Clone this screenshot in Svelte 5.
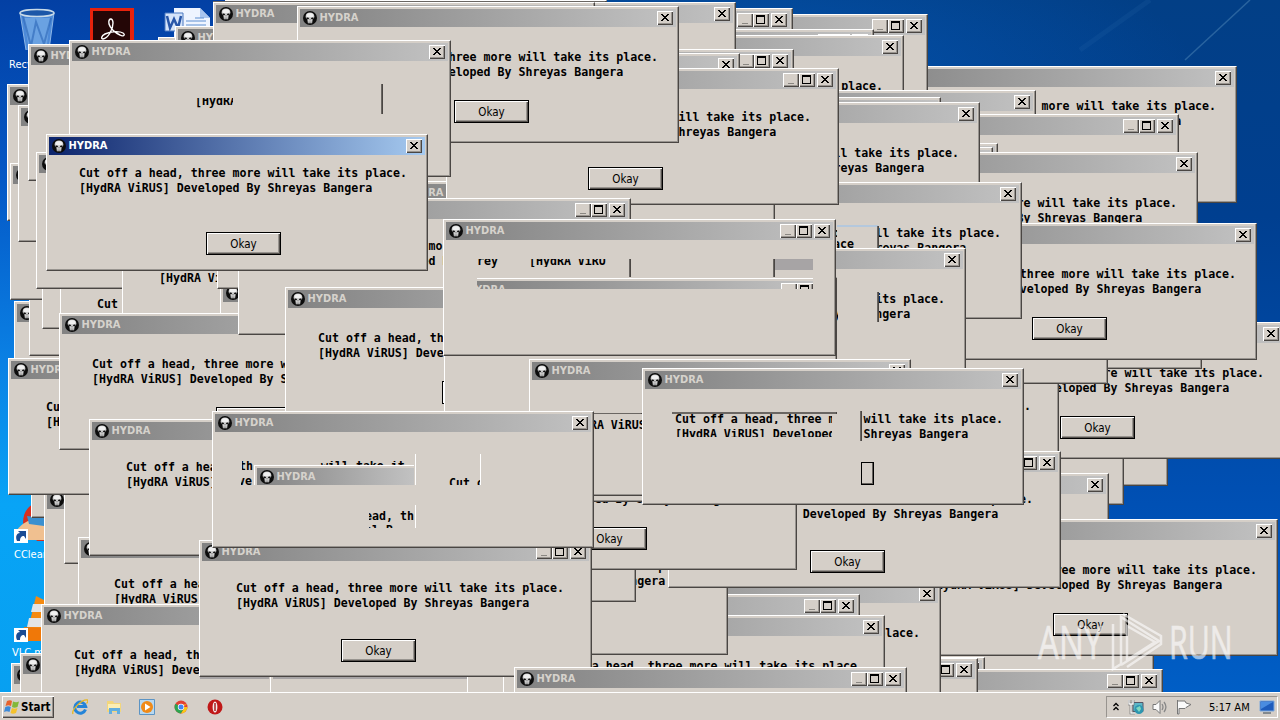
<script lang="ts">
    type Kind = "dialog" | "form";

    interface Win {
        x: number;
        y: number;
        kind: Kind;
        /** Offset of the first message line from the window's corner. */
        tx: number;
        ty: number;
        /** Offset of the Okay button. */
        bx: number;
        by: number;
        active: boolean;
        /** The client area holds a message. */
        message: boolean;
        /** The client area holds the Okay button. */
        button: boolean;
    }

    const lines = ["Cut off a head, three more will take its place.", "[HydRA ViRUS] Developed By Shreyas Bangera"];

    /** Windows that never painted their client area. */
    const blank = { message: false, button: false };
    const noButton = { button: false };

    /** Plain dialog: only a close button. */
    function dialog(x: number, y: number, opts: Partial<Win> = {}): Win {
        return { x, y, kind: "dialog", tx: 33, ty: 51, bx: 157, by: 94, active: false, message: true, button: true, ...opts };
    }

    /** Form window: minimize, maximize and close. */
    function form(x: number, y: number, opts: Partial<Win> = {}): Win {
        return { x, y, kind: "form", tx: 37, ty: 48, bx: 142, by: 99, active: false, message: true, button: true, ...opts };
    }

    // back to front
    const windows: Win[] = [
        dialog(158, 37, blank),
        dialog(225, 0, blank),
        dialog(855, 66, { ty: 40, button: false }),
        form(535, 14, blank),
        form(400, 8, blank),
        dialog(175, 26, blank),
        form(481, 29, blank),
        dialog(522, 35, noButton),
        dialog(654, 90, blank),
        form(548, 97, blank),
        form(786, 114, blank),
        dialog(616, 143, blank),
        dialog(611, 147, blank),
        dialog(354, 2, blank),
        dialog(213, 2, blank),
        form(401, 49, blank),
        dialog(358, 53, blank),
        dialog(816, 152, noButton),
        dialog(598, 102, noButton),
        dialog(786, 349, blank),
        dialog(742, 368, blank),
        dialog(903, 322),
        form(666, 358, noButton),
        form(809, 232, blank),
        form(715, 247, blank),
        dialog(875, 223),
        form(444, 92, blank),
        dialog(640, 182, noButton),
        dialog(584, 248, noButton),
        dialog(727, 473, blank),
        dialog(772, 534, blank),
        dialog(896, 519),
        dialog(603, 657, blank),
        form(770, 669, blank),
        form(585, 658, blank),
        dialog(559, 582, noButton),
        form(133, 600, blank),
        form(467, 594, blank),
        dialog(503, 615, noButton),
        dialog(7, 84, blank),
        dialog(14, 301, blank),
        dialog(29, 219, blank),
        dialog(10, 163, blank),
        dialog(18, 105, blank),
        dialog(28, 44, blank),
        form(42, 192, blank),
        form(60, 256, noButton),
        dialog(36, 152, blank),
        form(122, 215, noButton),
        form(220, 281, blank),
        dialog(217, 152, blank),
        dialog(31, 381, blank),
        dialog(44, 488, blank),
        form(64, 427, blank),
        form(8, 358, { tx: 38, ty: 49, button: false }),
        dialog(59, 313),
        form(78, 537, { tx: 36, ty: 47, button: false }),
        dialog(11, 663, blank),
        dialog(20, 653, blank),
        form(382, 181, blank),
        form(335, 518, noButton),
        dialog(254, 465, blank),
        form(668, 451),
        dialog(415, 433),
        form(300, 365, blank),
        form(446, 68, { ty: 49 }),
        dialog(297, 6),
        form(238, 198, noButton),
        dialog(285, 287),
        form(444, 277, blank),
        dialog(529, 359, noButton),
        form(89, 419, noButton),
        dialog(41, 604, noButton),
        form(199, 540),
        dialog(69, 40, blank),
        form(443, 219, blank),
        dialog(212, 411, blank),
        dialog(642, 368, noButton),
        form(514, 667, blank),
        dialog(46, 134, { ty: 39, bx: 160, by: 98, active: true }),
    ];

    type Tone = "face" | "dark" | "light" | "bar" | "sky";

    /** Stale areas of the screen that were never repainted. */
    const strips: { x: number; y: number; w: number; h: number; tone: Tone }[] = [
        { x: 213, y: 1, w: 393, h: 1, tone: "dark" },
        { x: 837, y: 225, w: 41, h: 23, tone: "face" },
        { x: 837, y: 225, w: 41, h: 2, tone: "sky" },
        { x: 877, y: 226, w: 2, h: 22, tone: "dark" },
        { x: 838, y: 290, w: 40, h: 34, tone: "face" },
        { x: 836, y: 292, w: 1, h: 30, tone: "dark" },
        { x: 877, y: 292, w: 2, h: 30, tone: "dark" },
        { x: 381, y: 84, w: 2, h: 30, tone: "dark" },
        { x: 629, y: 259, w: 2, h: 18, tone: "dark" },
        { x: 773, y: 259, w: 2, h: 18, tone: "dark" },
        { x: 775, y: 259, w: 38, h: 11, tone: "bar" },
        { x: 545, y: 398, w: 97, h: 13, tone: "face" },
        { x: 594, y: 411, w: 48, h: 7, tone: "face" },
        { x: 594, y: 413, w: 48, h: 1, tone: "dark" },
        { x: 415, y: 454, w: 1, h: 31, tone: "light" },
        { x: 480, y: 454, w: 1, h: 31, tone: "light" },
        { x: 415, y: 505, w: 1, h: 23, tone: "light" },
        { x: 672, y: 405, w: 189, h: 44, tone: "face" },
        { x: 672, y: 412, w: 165, h: 2, tone: "dark" },
        { x: 860, y: 411, w: 2, h: 30, tone: "dark" },
        { x: 410, y: 677, w: 20, h: 15, tone: "face" },
        { x: 200, y: 677, w: 69, h: 2, tone: "bar" },
        { x: 270, y: 677, w: 1, h: 15, tone: "light" },
        { x: 273, y: 677, w: 194, h: 2, tone: "bar" },
    ];

    /** Text left over from windows that moved on, clipped to a box. */
    const scraps: { x: number; y: number; w: number; h: number; dx: number; dy: number; text: string }[] = [
        { x: 837, y: 240, w: 18, h: 8, dx: -4, dy: -3, text: "ace" },
        { x: 196, y: 98, w: 37, h: 12, dx: -1, dy: -4, text: "[HydRA" },
        { x: 477, y: 259, w: 21, h: 12, dx: -7, dy: -5, text: "hrey" },
        { x: 530, y: 259, w: 78, h: 8, dx: -1, dy: -5, text: "[HydRA ViRU" },
        { x: 242, y: 461, w: 11, h: 12, dx: -3, dy: -2, text: "th" },
        { x: 318, y: 461, w: 87, h: 4, dx: 3, dy: -2, text: "will take its" },
        { x: 241, y: 478, w: 12, h: 11, dx: -3, dy: -4, text: "ve" },
        { x: 449, y: 477, w: 31, h: 8, dx: 0, dy: -1, text: "Cut o" },
        { x: 369, y: 509, w: 46, h: 15, dx: -4, dy: 0, text: "ead, th" },
        { x: 369, y: 525, w: 46, h: 3, dx: -4, dy: -2, text: "el B" },
        { x: 675, y: 414, w: 157, h: 10, dx: 0, dy: -2, text: "Cut off a head, three m" },
        { x: 675, y: 429, w: 157, h: 8, dx: 0, dy: -2, text: "[HydRA ViRUS] Developed" },
    ];
</script>

{#snippet skull()}
    <svg class="skull" viewBox="0 0 14 14">
        <circle cx="7" cy="7" r="7" fill="#0c0c0c" />
        <path d="M2.600 5.600C2.600 2.900 4.400 1.400 7 1.400s4.400 1.500 4.400 4.200c0 1.200-.6 1.900-1.700 2.400l-.6 4.200H4.900L4.300 8c-1.100-.5-1.700-1.200-1.700-2.400z" fill="#d0d0d0" />
        <path d="M3.500 3.800C4 2.700 5.300 2.200 7 2.200s3 .5 3.500 1.600L9.800 6H4.200z" fill="#f0f0f0" />
        <path d="M3.600 6.200l2.600.8-.7 1.300-1.700-.4zM10.400 6.200l-2.600.8.7 1.300 1.700-.4zM6.700 8.300h.6v1h-.6z" fill="#111" />
        <path d="M5.900 10.500v2M7 10.500v2M8.100 10.500v2" stroke="#444" stroke-width=".4" />
    </svg>
{/snippet}

{#snippet captionButton(name: string)}
    <span class="cap">
        <svg viewBox="0 0 16 14" shape-rendering="crispEdges">
            {#if name === "min"}
                <path d="M5 10h6v1H5z" fill="#8a8782" />
            {:else if name === "max"}
                <path d="M3 2h9v9H3zM4 4v6h7V4z" fill="#000" fill-rule="evenodd" />
            {:else}
                <path d="M4 3h2v1h1v1h2V4h1V3h2v1h-1v1h-1v1H9v1h1v1h1v1h1v1h-2V9H9V8H7v1H6v1H4V9h1V8h1V7h1V6H6V5H5V4H4z" fill="#000" />
            {/if}
        </svg>
    </span>
{/snippet}

<div class="desktop">
    <svg class="wallpaper" viewBox="0 0 1280 720">
        <defs>
            <linearGradient id="sky" x1="0" y1="0" x2="0" y2="1">
                <stop offset="0" stop-color="#0340a4" />
                <stop offset=".25" stop-color="#0458c6" />
                <stop offset=".5" stop-color="#0a80e4" />
                <stop offset=".7" stop-color="#08a4f6" />
                <stop offset="1" stop-color="#079ff0" />
            </linearGradient>
            <linearGradient id="right" x1="0" y1="0" x2="0" y2="1">
                <stop offset="0" stop-color="#023f86" />
                <stop offset=".3" stop-color="#003f90" />
                <stop offset=".7" stop-color="#0050b4" />
                <stop offset="1" stop-color="#0060c8" />
            </linearGradient>
            <radialGradient id="glow" cx=".2" cy=".4" r=".8">
                <stop offset="0" stop-color="#0458b8" stop-opacity=".8" />
                <stop offset="1" stop-color="#0458b8" stop-opacity="0" />
            </radialGradient>
        </defs>
        <rect width="640" height="720" fill="url(#sky)" />
        <rect x="600" width="680" height="720" fill="url(#right)" />
        <rect x="600" width="600" height="200" fill="url(#glow)" />
        <path d="M1185 60L1250 0" stroke="#5088b8" stroke-width="1.500" opacity=".5" />
        <path d="M1080 50L1150 0" stroke="#3070b0" stroke-width="5" opacity=".15" />

        <!-- recycle bin -->
        <path d="M20 12h34l-5 38H26z" fill="#4d8ad8" />
        <path d="M24 18h26l-3 26H28z" fill="#7fb2ea" opacity=".6" />
        <path d="M23 16l8 30 5-24 8 22 7-26" fill="none" stroke="#2c66b8" stroke-width="2" opacity=".6" />
        <path d="M20 13l6 37M54 13l-5 37" stroke="#a9cdf2" opacity=".8" />
        <ellipse cx="37" cy="13" rx="17" ry="3.500" fill="#1c57a8" stroke="#c8dae8" stroke-width="1.500" />
        <!-- pdf reader -->
        <path d="M90 8h44v40H90z" fill="#e8220c" />
        <path d="M93 11h37v36H93z" fill="#240606" />
        <path d="M109 24c-1-6 4-7 4-1 0 7-5 15-10 16-2 0-2-3 2-5 6-3 15-3 18-1 3 2 0 4-3 2-5-2-10-7-11-11z" fill="none" stroke="#fff" stroke-width="1.400" />
        <!-- word document -->
        <path d="M174 8h26l10 10v30h-36z" fill="#eef4ff" />
        <path d="M200 8l10 10h-10z" fill="#a8c4ee" />
        <path d="M186 21h20M186 25h20M195 18h9" stroke="#5e8fd0" />
        <path d="M165 13h18v18h-18z" fill="#d5e4fa" stroke="#4a78c0" />
        <path d="M167 16l3 12 4-9 4 9 3-12" fill="none" stroke="#2856a8" stroke-width="2.500" />
        <!-- cleaner -->
        <path d="M35 503c-8 4-12 10-12 20l14 18h8v-36z" fill="#d63020" />
        <path d="M17 530c8-10 16-12 27-8v18H28z" fill="#f0c090" />
        <path d="M27 516l17 2v8l-15-2z" fill="#3a90d0" />
        <!-- cone -->
        <path d="M36 596l-9 38h17v-34z" fill="#f58a10" />
        <path d="M33 604l-2 8h13v-8zM29 618l-2 9h17v-9z" fill="#e4e4e4" />
        <path d="M24 627l-2 14h22v-13z" fill="#f07808" />
        {#each [529, 628] as top}
            <rect x="14" y={top} width="14" height="14" fill="#fff" />
            <path d="M17 {top + 12}c-2-5 0-8 3-8l-2-2h8v8l-2-3c-3 0-4 2-4 5z" fill="#1c4c94" />
        {/each}
    </svg>
    <span class="label recycle">Recycle Bin</span>
    <span class="label cleaner">CCleaner</span>
    <span class="label player">VLC media</span>

    {#each windows as w}
        <section
            class="win {w.kind}"
            class:active={w.active}
            style:left="{w.x}px"
            style:top="{w.y}px"
            style:--tx="{w.tx}px"
            style:--ty="{w.ty}px"
            style:--bx="{w.bx}px"
            style:--by="{w.by}px"
        >
            <header>
                {@render skull()}
                <span class="name">HYDRA</span>
                {#if w.kind === "form"}
                    {@render captionButton("min")}
                    {@render captionButton("max")}
                {/if}
                <span class="gap"></span>
                {@render captionButton("close")}
            </header>
            {#if w.message}
                <div class="message">
                    {#each lines as line}
                        <p>{line}</p>
                    {/each}
                </div>
            {/if}
            {#if w.button}
                <span class="okay">Okay</span>
            {/if}
        </section>
    {/each}

    {#each strips as s}
        <i class="strip {s.tone}" style:left="{s.x}px" style:top="{s.y}px" style:width="{s.w}px" style:height="{s.h}px"></i>
    {/each}

    {#each scraps as s}
        <div class="scrap" style:left="{s.x}px" style:top="{s.y}px" style:width="{s.w}px" style:height="{s.h}px">
            <p style:margin-left="{s.dx}px" style:margin-top="{s.dy}px">{s.text}</p>
        </div>
    {/each}

    <div class="torn upper">
        <header>
            <span class="name">YDRA</span>
            {@render captionButton("min")}
            {@render captionButton("max")}
        </header>
    </div>
    <div class="torn lower">
        <header>
            {@render skull()}
            <span class="name">HYDRA</span>
        </header>
    </div>
    <i class="sliver"></i>

    <footer class="taskbar">
        <div class="start">
            <svg viewBox="0 0 16 16" width="16" height="16">
                <path d="M3 2c2-1 4-1 5 0L7 7C5 6 4 6 1.500 7z" fill="#e8622c" />
                <path d="M9 2.500c2 1 4 1 6 0L13.500 8c-2 1-4 1-5.500 0z" fill="#83b83a" />
                <path d="M1.300 8c2-1 4-1 5.500 0L5.500 13c-2-1-3.500-1-5.500 0z" fill="#3d8ad8" />
                <path d="M8 9c1.500 1 3.500 1 5.500 0L12 14c-2 1-4 1-5.500 0z" fill="#f5c22c" />
            </svg>
            <b>Start</b>
        </div>
        <div class="launch">
            <svg viewBox="0 0 16 16">
                <path d="M13.500 10.500A5.500 5.500 0 1 1 13.700 7.500H5" fill="none" stroke="#2484d8" stroke-width="3" />
                <path d="M1 15C-1 11 10 0 15.500 1c1 1-.5 3-1 3.500" fill="none" stroke="#e8b820" stroke-width="1.300" />
            </svg>
            <svg viewBox="0 0 16 16">
                <path d="M1 2h6l1 2h7v9H1z" fill="#f2d67c" />
                <path d="M2 5h12v5H2z" fill="#fbeeb4" />
                <path d="M3 9h11v6h-3v-3H6v3H3z" fill="#62aede" />
            </svg>
            <svg viewBox="0 0 16 16">
                <path d="M.5.500h15v15H.5z" fill="#b8d8f0" stroke="#5c94c4" />
                <circle cx="8" cy="8" r="6" fill="#f08a18" />
                <path d="M6 4.500L11.500 8 6 11.500z" fill="#fff" />
            </svg>
            <svg viewBox="0 0 16 16">
                <circle cx="8" cy="8" r="6.500" fill="#e34133" />
                <path d="M8 8L2.400 4.800A6.500 6.500 0 0 0 8 14.500L11 9.500z" fill="#2da450" />
                <path d="M8 8h6.500A6.500 6.500 0 0 1 8 14.500l3-5-.5-4h3.800z" fill="#fbc816" />
                <circle cx="8" cy="8" r="3.200" fill="#fff" />
                <circle cx="8" cy="8" r="2.500" fill="#4285f4" />
            </svg>
            <svg viewBox="0 0 16 16">
                <circle cx="8" cy="8" r="7.500" fill="#c01818" />
                <ellipse cx="8" cy="8" rx="2.400" ry="5.500" fill="#f4ecec" />
                <path d="M7.300 4h1.400v8H7.300z" fill="#a01414" />
            </svg>
        </div>
        <div class="tray">
            <svg viewBox="0 0 8 12" width="8" height="12">
                <path d="M1.500 5L4 2.500 6.500 5M1.500 9L4 6.500 6.500 9" fill="none" stroke="#000" stroke-width="1.300" />
            </svg>
            <svg viewBox="0 0 16 16" width="16" height="16">
                <path d="M5 3.500h10v9H5z" fill="#5cb6c8" stroke="#556" />
                <path d="M1 1v4h4V1M3 5v9h4" fill="none" stroke="#666" stroke-width="2.600" />
                <path d="M1 1v4h4V1M3 5v9h4" fill="none" stroke="#f8f8f8" stroke-width="1.400" />
                <circle cx="11" cy="10.500" r="4.500" fill="#2e96b0" />
                <path d="M8 9l4-2 1 3-2 3z" fill="#80d8c0" />
            </svg>
            <svg viewBox="0 0 16 16" width="16" height="16">
                <path d="M1 5.500h3l4-4v13l-4-4H1z" fill="#fafafa" stroke="#777" />
                <path d="M10 5c1.300 2 1.300 4 0 6M12 3c2.300 3 2.300 7 0 10" fill="none" stroke="#888" stroke-width="1.300" />
            </svg>
            <svg viewBox="0 0 16 16" width="16" height="16">
                <path d="M1.500 1v14h1.500V9.500h6l1-1 5-3-5-1.500-1-2H1.500z" fill="#fafafa" stroke="#777" />
            </svg>
            <span class="clock">5:17 AM</span>
            <svg viewBox="0 0 16 14" width="16" height="14">
                <path d="M1 1h14v10H1z" fill="#1e5cbc" stroke="#7ca8dc" />
                <path d="M2 2h12L2 9z" fill="#4a8ce0" />
                <path d="M4 13h8" stroke="#345" />
            </svg>
        </div>
    </footer>

    <div class="watermark">
        <span class="word any">ANY</span>
        <svg viewBox="0 0 56 62" width="56" height="62">
            <path d="M4 14v45l8-5V7l38 24-38 24M14 4l38 22v8L18 57M18 16l28 16-28 18z" fill="none" stroke="#fff" stroke-width="2.500" />
        </svg>
        <span class="word run">RUN</span>
    </div>
</div>

<style>
    :global(body) {
        margin: 0;
        overflow: hidden;
    }

    .desktop {
        --face: #d5cfc8;
        --dark: #4a4643;
        position: relative;
        width: 1280px;
        height: 720px;
        overflow: hidden;
        display: flex;
        flex-direction: column;
        justify-content: flex-end;
        font-family: "DejaVu Sans Condensed", "DejaVu Sans", sans-serif;
        font-size: 11px;
        color: #000;
    }

    p {
        margin: 0;
        height: 15px;
        white-space: pre;
        font: bold 11.6px/15px "DejaVu Sans Mono", monospace;
    }

    .wallpaper {
        position: absolute;
        inset: 0;
    }

    .label {
        position: absolute;
        color: #fff;
        white-space: nowrap;
    }

    .recycle {
        left: 9px;
        top: 58px;
    }

    .cleaner {
        left: 14px;
        top: 548px;
    }

    .player {
        left: 12px;
        top: 646px;
    }

    .win {
        position: absolute;
        box-sizing: border-box;
        width: 382px;
        height: 137px;
        padding: 2px;
        overflow: hidden;
        background: var(--face);
        border: 1px solid #fff;
        border-right-color: var(--dark);
        border-bottom-color: var(--dark);
        box-shadow: inset -1px -1px #98948f;
    }

    .win.form {
        width: 393px;
    }

    header {
        display: flex;
        align-items: center;
        box-sizing: border-box;
        height: 18px;
        padding: 0 3px;
        background: linear-gradient(90deg, #828282, #c2c2c2);
        color: #d6d2cc;
    }

    .active header {
        background: linear-gradient(90deg, #0c246c, #a6caf0);
        color: #fff;
    }

    .skull {
        width: 14px;
        height: 14px;
        flex: none;
    }

    .name {
        flex: 1;
        margin-left: 2.5px;
        font: bold 11px/18px "DejaVu Sans Condensed", "DejaVu Sans", sans-serif;
    }

    .gap {
        width: 2px;
    }

    .cap {
        box-sizing: border-box;
        width: 16px;
        height: 14px;
        background: var(--face);
        box-shadow:
            inset 1px 1px #fff,
            inset -1px -1px var(--dark),
            inset -2px -2px #999590;
    }

    .cap svg {
        display: block;
        width: 16px;
        height: 14px;
    }

    .message {
        height: 30px;
        padding-left: calc(var(--tx) - 3px);
        padding-top: calc(var(--ty) - 28px);
    }

    .okay {
        display: block;
        box-sizing: border-box;
        width: 75px;
        height: 23px;
        margin-left: calc(var(--bx) - 3px);
        margin-top: calc(var(--by) - var(--ty) - 23px);
        border: 1px solid #000;
        box-shadow:
            inset 1px 1px #fff,
            inset -1px -1px #55514d,
            inset -2px -2px #98948f;
        text-align: center;
        font: 11.5px/22px "DejaVu Sans Condensed", "DejaVu Sans", sans-serif;
    }

    .strip,
    .scrap,
    .torn,
    .sliver {
        position: absolute;
        overflow: hidden;
    }

    .face {
        background: var(--face);
    }

    .dark {
        background: #6a6662;
        border-right: 1px solid var(--dark);
        box-sizing: border-box;
    }

    .light {
        background: #fff;
    }

    .bar {
        background: #a7a4a5;
    }

    .sky {
        background: #b4c8dd;
    }

    .torn {
        box-sizing: border-box;
        border-top: 1px solid #fff;
        padding-top: 2px;
    }

    .upper {
        left: 477px;
        top: 278px;
        width: 336px;
        height: 11px;
    }

    .upper header {
        padding-left: 0;
        padding-right: 0;
    }

    .upper .name {
        margin-left: -2px;
    }

    .lower {
        left: 254px;
        top: 465px;
        width: 160px;
        height: 20px;
        border-left: 1px solid #fff;
        padding-left: 2px;
    }

    .sliver {
        left: 861px;
        top: 462px;
        box-sizing: border-box;
        width: 13px;
        height: 23px;
        border: 1px solid #000;
        box-shadow: inset -1px -1px #65615d;
    }

    .taskbar {
        position: relative;
        box-sizing: border-box;
        height: 28px;
        display: flex;
        align-items: center;
        padding: 1px 2px 0;
        background: var(--face);
        border-top: 1px solid #fff;
    }

    .start {
        box-sizing: border-box;
        width: 52px;
        height: 22px;
        display: flex;
        align-items: center;
        gap: 1px;
        padding-left: 2px;
        box-shadow:
            inset 1px 1px #fff,
            inset -1px -1px var(--dark),
            inset -2px -2px #98948f;
    }

    .start b {
        font-size: 11.5px;
    }

    .launch {
        display: flex;
        gap: 17.7px;
        padding-left: 18px;
    }

    .launch svg {
        width: 16px;
        height: 16px;
    }

    .tray {
        box-sizing: border-box;
        width: 172px;
        height: 22px;
        margin-left: auto;
        display: flex;
        align-items: center;
        gap: 8px;
        padding-left: 5px;
        border: 1px solid #98948f;
        border-right-color: #fff;
        border-bottom-color: #fff;
    }

    .clock {
        margin-left: 9px;
        width: 42px;
        white-space: nowrap;
    }

    .watermark {
        position: absolute;
        left: 1038px;
        top: 610px;
        display: flex;
        align-items: center;
        gap: 4px;
        color: #fff;
        opacity: 0.6;
    }

    .word {
        width: 67px;
        font: 46px/62px "Open Sans", "Noto Sans", sans-serif;
        -webkit-text-stroke: 0.6px #fff;
        transform-origin: left;
    }

    .any {
        transform: scaleX(0.72);
    }

    .run {
        transform: scaleX(0.66);
    }
</style>
